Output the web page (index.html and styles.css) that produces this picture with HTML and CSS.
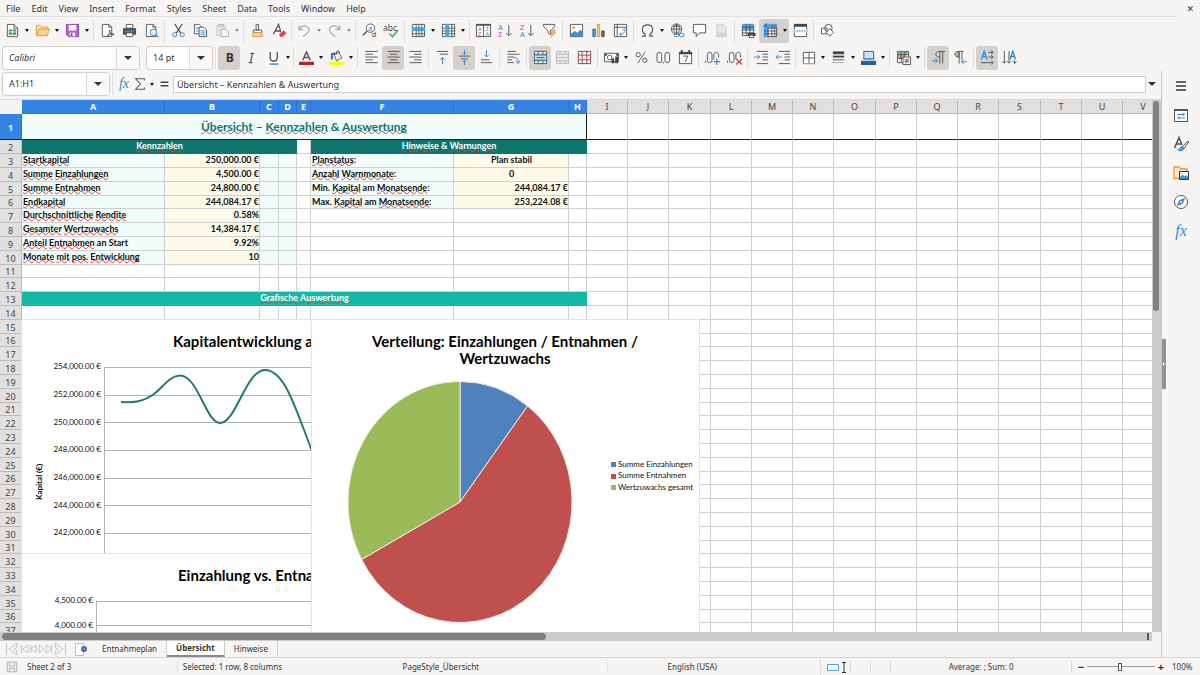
FILE: index.html
```html
<!DOCTYPE html>
<html lang="de">
<head>
<meta charset="utf-8">
<title>Übersicht</title>
<link rel="stylesheet" href="styles.css">
</head>
<body>
<header class="menubar">
  <nav class="menus">
    <button>File</button><button>Edit</button><button>View</button><button>Insert</button><button>Format</button><button>Styles</button><button>Sheet</button><button>Data</button><button>Tools</button><button>Window</button><button>Help</button>
  </nav>
  <button class="close" aria-label="Close">✕</button>
</header>

<div class="toolbar">
  <button class="tb" aria-label="New"><svg viewBox="0 0 16 16"><path class="w" stroke="#3a9b4e" d="M2.500 1.500h7l4 4v9h-11z"/><path class="n" stroke="#3a9b4e" d="M9.500 1.500v4h4"/><path fill="#2f9e48" d="M4 7h8v5.500H4z"/><path stroke="#fff" d="M4 9.500h8M8 7v5"/></svg></button><button class="dd" aria-label="New menu"></button>
  <button class="tb" aria-label="Open"><svg viewBox="0 0 16 16"><path fill="#fbe3b5" stroke="#e9973a" d="M1.500 13.500v-11h4l1.500 2h6.500v2"/><path fill="#fbd58e" stroke="#e9973a" d="M1.500 13.500l2.500-7h11.500l-2.500 7z"/></svg></button><button class="dd" aria-label="Open menu"></button>
  <button class="tb" aria-label="Save"><svg viewBox="0 0 16 16"><path fill="#b565c9" stroke="#8e3ea8" d="M1.500 1.500h13v13h-11l-2-2z"/><path fill="#fff" d="M4 2h8v6H4zM5 10.500h6V14H5z"/><path fill="#8e3ea8" d="M6 11h2v3H6z"/></svg></button><button class="dd" aria-label="Save menu"></button>
  <i class="sep"></i>
  <button class="tb" aria-label="Export as PDF"><svg viewBox="0 0 16 16"><path class="w" d="M2.500 1.500h7l3 3v10h-10z"/><path class="n" d="M9.500 1.500v3h3"/><path class="n" stroke="#d9303a" d="M7 14.500c3-2 4-5 3.500-6.500s-1.500 0 .500 2.500 4 2.500 4 1.500-4-1-8 2.500"/></svg></button>
  <button class="tb" aria-label="Print"><svg viewBox="0 0 16 16"><path class="w" d="M4.500 1.500h7v4h-7z"/><path fill="#4a5055" d="M1 5.500h14v7H1z"/><path fill="#2e8bd8" d="M3 8h10v1.500H3z"/><path class="w" d="M4.500 10.500h7v4h-7z"/></svg></button>
  <button class="tb" aria-label="Print preview"><svg viewBox="0 0 16 16"><path class="w" d="M2.500 1.500h7l3 3v10h-10z"/><path class="n" d="M9.500 1.500v3h3"/><circle cx="10" cy="10" r="3.500" fill="#e3f1fb" stroke="#2e8bd8"/><path stroke="#2e8bd8" stroke-width="1.500" d="M12.500 12.500l2.500 2.500"/></svg></button>
  <i class="sep"></i>
  <button class="tb" aria-label="Cut"><svg viewBox="0 0 16 16"><path class="n" stroke-width="1.300" d="M4 1l6.500 10M12 1L5.500 11"/><circle class="b" cx="4" cy="12.500" r="2.200"/><circle class="b" cx="12" cy="12.500" r="2.200"/></svg></button>
  <button class="tb" aria-label="Copy"><svg viewBox="0 0 16 16"><path class="w" d="M1.500 1.500h5l2.500 2.500v7.500H1.500z"/><path stroke="#2e8bd8" d="M3 5.500h4M3 8.500h4"/><path class="w" d="M6.500 4.500h5l3 3v7h-8z"/><path stroke="#2e8bd8" d="M8 8.500h5M8 10.500h5M8 12.500h5"/></svg></button>
  <button class="tb dim" aria-label="Paste"><svg viewBox="0 0 16 16"><path fill="#d4d2d0" stroke="#aaa" d="M1.500 2.500h10v11h-10z"/><path class="w" stroke="#aaa" d="M4 1.500h5v2H4zM6.500 6.500h5l3 3v5h-8z"/></svg></button><button class="dd dim" aria-label="Paste menu"></button>
  <i class="sep"></i>
  <button class="tb" aria-label="Clone formatting"><svg viewBox="0 0 16 16"><path class="w" d="M6.500 1.500h2.500v6H6.500zM3.500 7.500h9v3h-9z"/><path fill="#fbd58e" stroke="#e9973a" d="M3.500 10.500h9l1 4h-11z"/></svg></button>
  <button class="tb" aria-label="Clear formatting"><svg viewBox="0 0 16 16"><path class="n" stroke-width="1.400" d="M1.500 12L7 1.500 9.500 10M3 8.500h6"/><path fill="#e64552" d="M7.500 12l5-4 3 3-4.500 4H9z"/></svg></button>
  <i class="sep tight"></i>
  <button class="tb dim" aria-label="Undo"><svg viewBox="0 0 16 16"><path class="n" stroke-width="1.300" d="M2 2.500v4.500h4.500M2 7c3-5 9-5 10.500-1.500S11 11 6.500 14.500"/></svg></button><button class="dd dim" aria-label="Undo list"></button>
  <button class="tb dim" aria-label="Redo"><svg viewBox="0 0 16 16"><path class="n" stroke-width="1.300" d="M13.500 2.500v4.500H9M13.500 7c-3-5-9-5-10.500-1.500S4.500 11 9 14.500"/></svg></button><button class="dd dim" aria-label="Redo list"></button>
  <i class="sep"></i>
  <button class="tb" aria-label="Find and replace"><svg viewBox="0 0 16 16"><circle class="w" cx="9" cy="5.500" r="4.500"/><path class="n" stroke-width="1.600" d="M5.500 8.500L1 13"/><text x="6.500" y="8" font-size="8" fill="#2e8bd8">a</text><text x="10.500" y="15" font-size="8" fill="#444">d</text></svg></button>
  <button class="tb" aria-label="Spelling"><svg viewBox="0 0 16 16"><text x="-1" y="8" font-size="9" fill="#444">abc</text><path class="n ok" stroke-width="1.500" d="M6 11.500l3 3 6-7"/></svg></button>
  <i class="sep"></i>
  <button class="tb" aria-label="Row"><svg viewBox="0 0 16 16"><path class="w" d="M1.500 1.500h13v13h-13z"/><path fill="#4ba3e3" d="M1 4.500h14v4H1z"/><path class="n" d="M5.500 2v3M8.500 2v3M11.500 2v3M5.500 8v7M8.500 8v7M11.500 8v7M1 11.500h14"/></svg></button><button class="dd" aria-label="Row menu"></button>
  <button class="tb" aria-label="Column"><svg viewBox="0 0 16 16"><path class="w" d="M1.500 1.500h13v13h-13z"/><path fill="#4ba3e3" d="M4.500 1h4v14h-4z"/><path class="n" d="M2 5.500h3M2 8.500h3M2 11.500h3M8 5.500h7M8 8.500h7M8 11.500h7M11.500 1v14"/></svg></button><button class="dd" aria-label="Column menu"></button>
  <i class="sep"></i>
  <button class="tb" aria-label="Sort"><svg viewBox="0 0 16 16"><path class="w" d="M.5 1.500h15v13H.5z"/><path stroke="#555" stroke-width="2" d="M0 2h16"/><path stroke="#555" d="M8 2v13"/><text x="2" y="8.500" font-size="6" fill="#2e8bd8">A</text><text x="2" y="14" font-size="6" fill="#b146c2">Z</text><text x="10" y="8.500" font-size="6" fill="#b146c2">Z</text><text x="10" y="14" font-size="6" fill="#2e8bd8">A</text></svg></button>
  <button class="tb" aria-label="Sort ascending"><svg viewBox="0 0 16 16"><text x="0" y="7" font-size="8" fill="#2e8bd8">A</text><text x="0" y="15" font-size="8" fill="#b146c2">Z</text><path class="n" d="M11.500 2v11.500M8.500 10.500l3 3 3-3"/></svg></button>
  <button class="tb" aria-label="Sort descending"><svg viewBox="0 0 16 16"><text x="0" y="7" font-size="8" fill="#b146c2">Z</text><text x="0" y="15" font-size="8" fill="#2e8bd8">A</text><path class="n" d="M11.500 2v11.500M8.500 10.500l3 3 3-3"/></svg></button>
  <button class="tb" aria-label="AutoFilter"><svg viewBox="0 0 16 16"><path class="w" d="M1.500 1.500h12v2l-4.500 5v4l-2.500-2v-2l-5-5z"/><path fill="#fbb95e" stroke="#e9973a" stroke-width=".7" d="M11 7.500h3.500L12.500 10h2l-5 5.500 1.500-4H9.500z"/></svg></button>
  <i class="sep"></i>
  <button class="tb" aria-label="Image"><svg viewBox="0 0 16 16"><path class="w" d="M1.500 1.500h13v13h-13z"/><circle cx="5" cy="5" r="1.500" fill="#f2a13c"/><path fill="#3a94dc" d="M2 14v-2.500l4-3 3 2 3-3.500 2.500 2.500V14z"/></svg></button>
  <button class="tb" aria-label="Chart"><svg viewBox="0 0 16 16"><path fill="#4ba3e3" stroke="#1e6eb4" d="M2 6.500h2.500v8H2z"/><path fill="#fbc678" stroke="#e9973a" d="M6.700 1.500h2.500v13H6.700z"/><path fill="#777" stroke="#444" d="M11.500 8.500H14v6h-2.500z"/></svg></button>
  <button class="tb" aria-label="Pivot table"><svg viewBox="0 0 16 16"><path class="w" d="M1.500 1.500h13v13h-13zM1.500 4.500h13M4.500 1.500v13"/><path class="b" d="M7 12c4 1 6-2 5-5M10 8l2-2 2 2M9 10l-2 2 2 2"/></svg></button>
  <i class="sep"></i>
  <button class="tb" aria-label="Special character"><svg viewBox="0 0 16 16"><path class="n" stroke-width="1.200" d="M2 14h3.500v-2C1 9 1.500 2 8 2s7 7 2.500 10v2H14"/></svg></button><button class="dd" aria-label="Special characters"></button>
  <button class="tb" aria-label="Hyperlink"><svg viewBox="0 0 16 16"><circle class="n" cx="7" cy="6.500" r="5.500"/><path class="n" d="M1.500 6.500h11M7 1v11M3 3.500h8M7 1c-4 3-4 8 0 11M7 1c4 3 4 8 0 11"/><rect class="b" x="4.500" y="11" width="5" height="3.500" rx="1.700"/><rect class="b" x="10" y="11" width="5" height="3.500" rx="1.700"/></svg></button>
  <button class="tb" aria-label="Comment"><svg viewBox="0 0 16 16"><path class="w" d="M1.500 1.500h13v9H8l-3.500 4v-4h-3z"/></svg></button>
  <button class="tb dim" aria-label="Headers and footers"><svg viewBox="0 0 16 16"><path fill="#d4d2d0" stroke="#999" d="M3 1.500h7l3 3v10H3z"/><path fill="#aaa" d="M4 10.500h8V14H4z"/></svg></button>
  <i class="sep"></i>
  <button class="tb" aria-label="Print area"><svg viewBox="0 0 16 16"><path class="w" d="M1.500 1.500h12v12h-12z"/><path fill="#4ba3e3" d="M1 1h13v6H1z"/><path class="n" d="M1 4.500h13M1 7.500h13M1 10.500h13M5.500 1v12M9.500 1v12"/><path fill="#444" d="M7 10.500h8.500v3.500H7z"/><path class="w" d="M9 13h4.500v2.500H9z"/></svg></button>
  <span class="pair on"><button class="tb" aria-label="Freeze rows and columns"><svg viewBox="0 0 16 16"><path class="w" d="M1.500 1.500h13v13h-13z"/><path fill="#4ba3e3" d="M1 1h4.500v14H1zM1 1h14v4H1z"/><path class="n" d="M5.500 5v10M9.500 2v13M12.500 2v13M5 5.500h10M5 8.500h10M5 11.500h10"/><path stroke="#1e6eb4" d="M0 3.500h4M3.500 0v4M1 8.500h4M1 11.500h4"/></svg></button><button class="dd" aria-label="Freeze menu"></button></span>
  <button class="tb" aria-label="Split window"><svg viewBox="0 0 16 16"><path class="w" d="M1.500 1.500h13v13h-13z"/><path stroke="#444" stroke-width="3" d="M1 2.500h14"/><path stroke="#f6f5f4" stroke-width="3" d="M0 8.500h16"/><path stroke="#2e8bd8" stroke-dasharray="2 1" d="M0 8.500h16"/></svg></button>
  <i class="sep"></i>
  <button class="tb" aria-label="Draw functions"><svg viewBox="0 0 16 16"><path class="w" d="M1.500 5.500h6v6h-6z"/><circle class="n" cx="9" cy="5.500" r="4"/><path class="w" d="M10.500 6l4 4-4 4-4-4z"/></svg></button>
</div>

<div class="toolbar">
  <span class="combo font"><input type="text" value="Calibri" aria-label="Font name"><button aria-label="Font list"></button></span>
  <span class="combo size"><input type="text" value="14 pt" aria-label="Font size"><button aria-label="Size list"></button></span>
  <i class="sep"></i>
  <button class="tb on" aria-label="Bold"><svg viewBox="0 0 16 16"><text x="4" y="13" font-size="13" font-weight="700" fill="#333">B</text></svg></button>
  <button class="tb" aria-label="Italic"><svg viewBox="0 0 16 16"><path class="n" stroke-width="1.300" d="M7 3.500h4M5 13.500h4M9 3.500l-2 10"/></svg></button>
  <button class="tb" aria-label="Underline"><svg viewBox="0 0 16 16"><path class="n" stroke-width="1.400" d="M4.500 2v6c0 5 7.500 5 7.500 0V2"/><path stroke="#2e8bd8" stroke-width="1.500" d="M4 15h9"/></svg></button><button class="dd" aria-label="Underline styles"></button>
  <i class="sep tight"></i>
  <button class="tb" aria-label="Font color"><svg viewBox="0 0 16 16"><path class="n" stroke-width="1.500" d="M4 11L8 2l4 9M5.500 8h5"/><path fill="#c21f1f" d="M0 12.500h16V16H0z"/></svg></button><button class="dd" aria-label="Font colors"></button>
  <button class="tb" aria-label="Highlighting"><svg viewBox="0 0 16 16"><path class="w" d="M5.500 5l5-2.500 3 6-5.500 3z"/><path class="n" d="M8 5V2c0-1.500 3-1.500 3 0v2"/><path fill="none" stroke="#1e6eb4" stroke-width="2" d="M3 10V4.500l4-1"/><path fill="#ff0" d="M0 12.500h16V16H0z"/></svg></button><button class="dd" aria-label="Highlight colors"></button>
  <i class="sep"></i>
  <button class="tb" aria-label="Align left"><svg viewBox="0 0 16 16"><path class="n" d="M1.500 1.500h13M1.500 4.500h8M1.500 7.500h13M1.500 10.500h8M1.500 13.500h13"/></svg></button>
  <button class="tb on" aria-label="Align center"><svg viewBox="0 0 16 16"><path class="n" d="M1.500 1.500h13M4 4.500h8M1.500 7.500h13M4 10.500h8M1.500 13.500h13"/></svg></button>
  <button class="tb" aria-label="Align right"><svg viewBox="0 0 16 16"><path class="n" d="M1.500 1.500h13M6.500 4.500h8M1.500 7.500h13M6.500 10.500h8M1.500 13.500h13"/></svg></button>
  <i class="sep"></i>
  <button class="tb" aria-label="Align top"><svg viewBox="0 0 16 16"><path class="n" d="M2 1.500h12M5 4.500h9"/><path class="b" d="M8 15V8M5.500 10.500L8 8l2.500 2.500"/></svg></button>
  <button class="tb on" aria-label="Center vertically"><svg viewBox="0 0 16 16"><path class="n" d="M2 6.500h12M4.500 9.500h7"/><path class="b" d="M8 0v4.500M6 3l2 2 2-2M8 16v-4.500M6 13l2-2 2 2"/></svg></button>
  <button class="tb" aria-label="Align bottom"><svg viewBox="0 0 16 16"><path class="n" d="M2 10.500h9M2 13.500h12"/><path class="b" d="M8 0v7M5.500 5L8 7.500 10.500 5"/></svg></button>
  <i class="sep"></i>
  <button class="tb" aria-label="Wrap text"><svg viewBox="0 0 16 16"><path class="n" d="M1.500 1.500h9M1.500 4.500h13M1.500 7.500h7M1.500 10.500h5M1.500 13.500h7"/><path class="b" d="M8 8.500c4-1 5 1 5 5M10.500 11.500l2.500 3 2-3"/></svg></button>
  <i class="sep"></i>
  <button class="tb on" aria-label="Merge and center"><svg viewBox="0 0 16 16"><path class="w" d="M1.500 1.500h13v13h-13z"/><path class="n" d="M1.500 4.500h13M1.500 11.500h13M5.500 1.500v3M10.500 1.500v3M5.500 11.500v3M10.500 11.500v3"/><path fill="#bfe0f7" stroke="#2e8bd8" d="M1.500 5.500h13v5h-13z"/><path class="n" d="M4 8h8"/></svg></button>
  <button class="tb dim" aria-label="Merge cells"><svg viewBox="0 0 16 16"><path fill="#ddd" stroke="#777" d="M1.500 1.500h13v13h-13zM1.500 4.500h13M1.500 8h13M1.500 11.500h13M5.500 1.500v3M10.500 1.500v3M5.500 11.500v3M10.500 11.500v3"/></svg></button>
  <button class="tb" aria-label="Unmerge cells"><svg viewBox="0 0 16 16"><path class="w" d="M1.500 1.500h13v13h-13zM5.500 1.500v13M10.500 1.500v13"/><path class="w red" d="M1.500 5.500h13v5h-13zM5.500 5.500v5M10.500 5.500v5"/></svg></button>
  <i class="sep"></i>
  <button class="tb" aria-label="Currency"><svg viewBox="0 0 16 16"><path class="w" d="M.5 3.500h15v9H.5z"/><circle class="n" cx="6" cy="8" r="2.500"/><path fill="#444" d="M8 9h3v5H8zM12 7h3v7h-3z"/><path fill="#444" d="M1 4h2v2H1zM13 4h2v2h-2z"/></svg></button><button class="dd" aria-label="Currency list"></button>
  <button class="tb" aria-label="Percent"><svg viewBox="0 0 16 16"><circle class="n" cx="4.500" cy="5" r="2.300"/><circle class="n" cx="11.500" cy="11" r="2.300"/><path class="n" d="M12 2L4 14"/></svg></button>
  <button class="tb" aria-label="Number"><svg viewBox="0 0 16 16"><rect class="n" x="1" y="2.500" width="5" height="11" rx="2.500"/><rect class="n" x="9.500" y="2.500" width="5" height="11" rx="2.500"/><path stroke="#555" d="M7.500 12.500v2"/></svg></button>
  <button class="tb" aria-label="Date"><svg viewBox="0 0 16 16"><path class="w" d="M1.500 2.500h13v12h-13z"/><path stroke="#444" stroke-width="2" d="M1 3.500h14M4 0v4M12 0v4"/><path class="n" d="M5.500 6.500h5l-3 6.500"/></svg></button>
  <i class="sep"></i>
  <button class="tb" aria-label="Add decimal place"><svg viewBox="0 0 16 16"><path stroke="#555" d="M.5 11.500v2"/><rect class="n" x="2.500" y="2.500" width="5" height="11" rx="2.500"/><path class="n" d="M9.500 10V5c0-3.300 5-3.300 5 0v3"/><path class="b" stroke-width="1.300" d="M12.500 9v7M9 12.500h7"/></svg></button>
  <button class="tb" aria-label="Delete decimal place"><svg viewBox="0 0 16 16"><path stroke="#555" d="M.5 11.500v2"/><rect class="n" x="2.500" y="2.500" width="5" height="11" rx="2.500"/><path class="n" d="M9.500 10V5c0-3.300 5-3.300 5 0v3"/><path class="n red" stroke-width="1.300" d="M10 9.500l6 6M16 9.500l-6 6"/></svg></button>
  <i class="sep"></i>
  <button class="tb" aria-label="Increase indent"><svg viewBox="0 0 16 16"><path class="n" d="M3 1.500h12M9 4.500h6M9 7.500h6M9 10.500h6M3 14.500h12"/><path class="b" d="M0 7.500h6M3.500 5L6 7.500 3.500 10"/></svg></button>
  <button class="tb" aria-label="Decrease indent"><svg viewBox="0 0 16 16"><path class="n" d="M3 1.500h12M9 4.500h6M9 7.500h6M9 10.500h6M3 14.500h12"/><path class="b" d="M0 7.500h6M2.500 5L0 7.500 2.500 10"/></svg></button>
  <i class="sep tight"></i>
  <button class="tb" aria-label="Borders"><svg viewBox="0 0 16 16"><path class="w" d="M2.500 2.500h12v12h-12zM8.500 2.500v12M2.500 8.500h12"/><path stroke="#f2a13c" d="M2 14.500h13"/></svg></button><button class="dd" aria-label="Borders list"></button>
  <button class="tb" aria-label="Border style"><svg viewBox="0 0 16 16"><path stroke="#444" stroke-width="3" d="M2 3h12"/><path stroke="#444" stroke-width="2" d="M2 7h12"/><path stroke="#555" d="M2 10.500h12"/><path stroke="#555" stroke-dasharray="1 1" d="M2 13.500h12"/></svg></button><button class="dd" aria-label="Border styles"></button>
  <button class="tb" aria-label="Border color"><svg viewBox="0 0 16 16"><path fill="#c9e3f7" stroke="#555" d="M3 1.500h10.500v8H3z"/><path stroke="#2e8bd8" d="M2 9.500h12.500"/><path fill="#1d63a8" d="M0 11.500h16V16H0z"/></svg></button><button class="dd" aria-label="Border colors"></button>
  <i class="sep"></i>
  <button class="tb" aria-label="Conditional formatting"><svg viewBox="0 0 16 16"><path class="w" d="M1.500 1.500h12v12h-12z"/><path fill="#7cc98a" d="M2 2h11v3H2z"/><path fill="#f08a84" d="M2 5h8v4H2z"/><path class="n" d="M1.500 5h12M1.500 9h12M5.500 1.500v12M9.500 1.500v12"/><path class="w" d="M7.500 7.500h8v8h-8z"/><path class="n" d="M9 10.500h5M9 12.500h5M13 9l-3 5"/></svg></button><button class="dd" aria-label="Conditional list"></button>
  <i class="sep"></i>
  <button class="tb on" aria-label="Left to right"><svg viewBox="0 0 16 16"><path class="n" d="M15 1.500H8.500c-4.500 0-4.500 6 0 6h1M9.500 1.500v13M12.500 1.500v13"/><path class="b" d="M1 11.500h6M4.500 9L7 11.500 4.500 14"/></svg></button>
  <button class="tb" aria-label="Right to left"><svg viewBox="0 0 16 16"><path fill="#bbb" stroke="#555" d="M11 1.500H5.500c-4.500 0-4.500 6 0 6h1v-6"/><path class="n" d="M6.500 1.500v13M9.500 1.500v9"/><path class="b" d="M15 12.500H9M11.500 10L9 12.500l2.500 2.500"/></svg></button>
  <i class="sep"></i>
  <button class="tb on" aria-label="Text direction horizontal"><svg viewBox="0 0 16 16"><path class="b" stroke-width="1.500" d="M1.500 10L4.500 1.500 7.500 10M2.500 7h4"/><path class="n" d="M9 2.500h5M12 .5l2 2-2 2M9 7.500h5M12 5.500l2 2-2 2M1 13.500h13M12 11.500l2 2-2 2"/></svg></button>
  <button class="tb" aria-label="Text direction vertical"><svg viewBox="0 0 16 16"><path class="b" stroke-width="1.500" d="M8.500 10l3-8.500 3 8.500M9.500 7h4"/><path class="n" d="M2.500 1v13M.5 12l2 2 2-2M7.500 1v13M5.500 12l2 2 2-2M13.500 11v4M11.500 12l2 2 2-2"/></svg></button>
</div>

<div class="workspace">
  <main class="editor">
    <div class="formula-bar">
      <span class="combo name"><input type="text" value="A1:H1" aria-label="Name box"><button aria-label="Name list"></button></span>
      <i class="sep"></i>
      <button class="fb fx" aria-label="Function wizard"><i>fx</i></button>
      <button class="fb" aria-label="Select function"><svg viewBox="0 0 16 16"><path class="n" stroke-width="1.200" d="M13 4V2H3l5.500 6L3 14h10v-2"/></svg></button><button class="dd" aria-label="Functions"></button>
      <button class="fb" aria-label="Formula"><svg viewBox="0 0 16 16"><path stroke="#444" stroke-width="1.500" d="M4 6h9M4 10h9"/></svg></button>
      <input class="formula" type="text" value="Übersicht – Kennzahlen &amp; Auswertung" aria-label="Input line">
      <button class="dd big" aria-label="Expand formula bar"></button>
    </div>
    <div class="sheet">
      <div class="canvas">
        <table class="grid" id="grid"></table>
        <svg class="chart line" viewBox="0 0 560 234" role="img" aria-label="Kapitalentwicklung">
          <g class="lines"><path d="M82 47.500h478M82 75.500h478M82 102.500h478M82 130.500h478M82 158.500h478M82 185.500h478M82 213.500h478M82.500 47v187"/></g>
          <path class="curve" d="M99 82C112 82.600 121 82 132 74 141 67 148 55.500 158 55.500 176 55.500 184 103 198 103 214 103 224 50 243 50 263 50 274 90 290 131"/>
          <text class="title" x="151" y="27">Kapitalentwicklung am</text>
          <g class="axis"><text x="79" y="49">254,000.00 €</text><text x="79" y="77">252,000.00 €</text><text x="79" y="105">250,000.00 €</text><text x="79" y="132">248,000.00 €</text><text x="79" y="160">246,000.00 €</text><text x="79" y="188">244,000.00 €</text><text x="79" y="215">242,000.00 €</text></g>
          <text class="ylabel" transform="translate(20 180) rotate(-90)">Kapital (€)</text>
        </svg>
        <svg class="chart bar" viewBox="0 0 560 234" role="img" aria-label="Einzahlung vs. Entnahme">
          <g class="lines"><path d="M74 47.500h486M74 71.500h486M74.500 47v187"/></g>
          <text class="title" x="156" y="27">Einzahlung vs. Entnahme</text>
          <g class="axis"><text x="71" y="49">4,500.00 €</text><text x="71" y="74">4,000.00 €</text></g>
        </svg>
        <svg class="chart pie" viewBox="0 0 387 320" role="img" aria-label="Verteilung">
          <text class="title mid" x="193" y="27">Verteilung: Einzahlungen / Entnahmen /</text>
          <text class="title mid" x="193" y="44">Wertzuwachs</text>
          <g class="slices">
            <path fill="#4f81bd" d="M148 182V61.500A112 120.500 0 0 1 215.600 85.900z"/>
            <path fill="#c0504d" d="M148 182L215.600 85.900A112 120.500 0 1 1 49.600 239.500z"/>
            <path fill="#9bbb59" d="M148 182L49.600 239.500A112 120.500 0 0 1 148 61.500z"/>
          </g>
          <path fill="#4f81bd" d="M299 142h5v5h-5z"/><path fill="#c0504d" d="M299 154h5v5h-5z"/><path fill="#9bbb59" d="M299 165h5v5h-5z"/>
          <g class="legend"><text x="306" y="147">Summe Einzahlungen</text><text x="306" y="158">Summe Entnahmen</text><text x="306" y="170">Wertzuwachs gesamt</text></g>
        </svg>
      </div>
      <div class="vscroll"><div class="thumb"></div></div>
      <div class="hscroll"><div class="thumb"></div><i class="split"></i></div>
    </div>
    <div class="tabs">
      <svg class="tabnav" viewBox="0 0 62 14"><g fill="none" stroke="#c6c4c2"><path d="M1.500 1v12M12 1L4 7l8 6V9L9 7l3-2zM16.500 3v8M23 3l-5 4 5 4zM31 3l-5 4 5 4zM26 3v8M34 3l5 4-5 4zM41 3l5 4-5 4zM46.500 3v8M50 1l8 6-8 6V9l3-2-3-2zM60.500 1v12"/></g></svg>
      <button class="addsheet" aria-label="Add sheet"><svg viewBox="0 0 16 16"><path fill="#fff" stroke="#bbb" d="M2.500 2.500h8v12h-8z"/><circle cx="11" cy="8" r="2.200" fill="#fff" stroke="#2a64b8" stroke-width="1.500"/><path stroke="#2a64b8" d="M11 6v4M9 8h4"/></svg></button>
      <button class="tab">Entnahmeplan</button><button class="tab active">Übersicht</button><button class="tab">Hinweise</button>
    </div>
  </main>
  <aside class="sidebar">
    <button class="sb" aria-label="Sidebar settings"><svg viewBox="0 0 16 16"><path stroke="#333" stroke-width="1.500" d="M3 4h10M3 8h10M3 12h10"/></svg></button>
    <button class="sb" aria-label="Properties"><svg viewBox="0 0 16 16"><path class="w" d="M1.500 2.500h13v12h-13z"/><path stroke="#555" stroke-width="2" d="M1 3h14"/><path class="b" d="M4 7.500h8M4 11h8M10 6v3M6 9.500v3"/></svg></button>
    <button class="sb" aria-label="Styles"><svg viewBox="0 0 16 16"><path class="n" stroke-width="1.600" d="M1.500 12L6 1.500 9 9M3 8h5"/><path class="w" d="M15 5l-6 6 2 1.500L15.500 6z"/><path fill="#4ba3e3" stroke="#1e6eb4" stroke-width=".7" d="M9.500 10.500c-3 0-2 3-4.500 3.500 3 2 6.500 0 6-2z"/></svg></button>
    <button class="sb" aria-label="Gallery"><svg viewBox="0 0 16 16"><path fill="#fdeacb" stroke="#e9973a" stroke-width="1.300" d="M1 13.500V2h5l1.500 2H14v9.500z"/><path fill="#fff" stroke="#333" d="M6.500 6.500h9v8h-9z"/><path fill="#3a94dc" d="M7 14v-2l2.500-2.500 2 2L13 10l2 2v2z"/><circle cx="9" cy="8.500" r=".8" fill="#f2a13c"/></svg></button>
    <button class="sb" aria-label="Navigator"><svg viewBox="0 0 16 16"><circle class="w" cx="8" cy="8" r="6.500"/><path fill="#3a94dc" stroke="#1e6eb4" stroke-width=".7" d="M11.500 4.500L9.500 9.500l-5 2 2-5z"/><circle cx="8" cy="8" r="1" fill="#fff"/></svg></button>
    <button class="sb fx" aria-label="Functions"><i>fx</i></button>
    <button class="handle" aria-label="Hide sidebar"></button>
  </aside>
</div>

<footer class="status">
  <span class="doc"><svg viewBox="0 0 16 16"><path fill="none" stroke="#aaa" d="M2.500 2.500h11v11h-11zM5 3v4h6V3M5 13.500v-4h6v4"/></svg></span>
  <span>Sheet 2 of 3</span>
  <span class="line">Selected: 1 row, 8 columns</span>
  <span class="page">PageStyle_Übersicht</span>
  <span class="line center lang">English (USA)</span>
  <span class="line sel"><svg viewBox="0 0 24 16"><path fill="#fff" stroke="#4ba3e3" d="M1.500 5.500h11v6h-11z"/><path fill="none" stroke="#333" d="M16 3.500h4M16 13.500h4M18 3.500v10"/></svg></span>
  <span class="line"></span><span class="line"></span>
  <span class="line center">Average: ; Sum: 0</span>
  <span class="line zoom"><button aria-label="Zoom out">−</button><input type="range" min="0" max="100" value="48" aria-label="Zoom"><button aria-label="Zoom in">+</button></span>
  <span class="pct">100%</span>
</footer>
<script src="sheet.js"></script>
</body>
</html>
```
FILE: styles.css
```css
* { box-sizing: border-box; }
body { margin: 0; height: 100vh; display: flex; flex-direction: column; overflow: hidden; background: #f6f5f4; color: #333; font: 8px/12px "Noto Sans", sans-serif; }
button { border: 0; padding: 0; margin: 0; background: none; color: inherit; font: inherit; }
input { font: inherit; color: inherit; }
svg { display: block; overflow: visible; }
.n { fill: none; stroke: #555; }
.w { fill: #fff; stroke: #555; }
.b { fill: none; stroke: #2e8bd8; }
.ok { stroke: #35a853; }
.red { stroke: #d9303a; }

.menubar { display: flex; justify-content: space-between; align-items: center; height: 17px; flex: none; padding-right: 6px; }
.menus { display: flex; flex: 1; gap: 11px; padding-left: 6px; height: 17px; margin-right: 10px; border-bottom: 1px solid #e2e0de; font-size: 9px; line-height: 17px; }
.close { font: bold 9px/16px "DejaVu Sans", sans-serif; }

.toolbar { display: flex; align-items: center; height: 27px; flex: none; padding-left: 1px; }
.tb { width: 22px; height: 24px; flex: none; display: grid; place-items: center; border-radius: 3px; }
.tb svg { width: 15px; height: 15px; }
.on { background: #d3d0cd; border-radius: 3px; }
.pair { display: flex; }
.dim { opacity: .45; }
.dd { width: 8px; height: 24px; flex: none; display: grid; place-items: center; }
.dd::before, .combo button::before { content: ""; border: 2px solid transparent; border-top: 3px solid #111; border-bottom: 0; }
.dd.big::before, .combo button::before { border-width: 4px 4px 0; border-top-color: #333; }
.sep { width: 5px; height: 22px; flex: none; background: linear-gradient(#e0dedc, #e0dedc) center / 1px 100% no-repeat; }
.tight { width: 3px; }

.combo { display: flex; height: 24px; flex: none; border: 1px solid #cfccc9; border-radius: 4px; background: #fff; font-size: 9px; overflow: hidden; }
.combo input { flex: 1; min-width: 0; border: 0; padding: 0 6px; background: none; }
.combo button { width: 23px; display: grid; place-items: center; border-left: 1px solid #dedbd8; background: #faf9f8; }
.font { width: 138px; margin: 0 6px 0 1px; font-style: italic; }
.size { width: 67px; }
.name { width: 108px; }

.workspace { display: flex; flex: 1; min-height: 0; }
.editor { flex: 1; min-width: 0; display: flex; flex-direction: column; }
.formula-bar { display: flex; align-items: center; height: 29px; flex: none; padding: 0 5px 2px 2px; border-bottom: 1px solid #d8d6d4; }
.fb { width: 16px; height: 20px; flex: none; display: grid; place-items: center; }
.fb svg { width: 14px; height: 14px; }
.fx { color: #2e8bd8; font: 16px/20px "Liberation Serif", serif; }
.fb.fx { font-size: 14px; }
.formula-bar .sep { margin-right: 1px; }
.formula { flex: 1; min-width: 0; height: 17px; margin: 0 2px 0 1px; padding: 0 3px; border: 1px solid #d0cecb; background: #fff; font-size: 9px; }

.sheet { flex: 1; min-height: 0; display: grid; grid-template: 1fr 9px / 1fr 9px; }
.canvas { position: relative; overflow: hidden; background: #fff; }
.grid { table-layout: fixed; width: 0; border-collapse: separate; border-spacing: 0; font: bold 9px/10px Lato, sans-serif; color: #111; }
.grid tr { height: 14px; }
.grid tbody tr:nth-child(5n+1) { height: 13px; }
.grid tbody tr:first-child { height: 26px; }
.grid th, .grid td { padding: 0; height: inherit; border: 0 solid #cfcfcf; border-width: 0 1px 1px 0; white-space: nowrap; overflow: hidden; }
.grid th { font: 9px/10px "Noto Sans", sans-serif; color: #444; background: #e1e0df; border-color: #bdbbb9; }
.grid tbody th { padding-top: 2px; }
.grid th.corner { background: #f6f5f4; border-color: #f6f5f4; }
.grid th.picked { background: #3584e4; color: #fff; font-weight: 700; border-color: #2c73cb; }
.grid td { padding: 1px 0 0 1px; vertical-align: top; }
.grid tbody tr:first-child > * { border-bottom-color: #222; }
.grid .mint { background: #f0fdfa; }
.grid .cream { background: #fffbeb; }
.grid .num { text-align: right; padding-right: 0; }
.grid .mid { text-align: center; }
.grid .heading { text-align: center; padding: 0; font-size: 12px; line-height: 24px; color: #0f766e; vertical-align: middle; border-right-color: #222; background: #f0fdfa; }
.grid .band { text-align: center; color: #fff; background: #0f766e; border-color: #0f766e; }
.grid .teal { background: #14b8a6; border-color: #14b8a6; }
.spell { text-decoration: underline wavy #e03c3c 1px; text-decoration-skip-ink: none; text-underline-offset: -1px; }

.chart { position: absolute; overflow: hidden; background: #fff; outline: 1px solid #e3e3e3; font-family: Lato, sans-serif; }
.line.chart { left: 22px; top: 220px; width: 560px; height: 234px; }
.bar.chart { left: 22px; top: 454px; width: 560px; height: 234px; }
.pie.chart { left: 312px; top: 220px; width: 387px; height: 320px; }
.lines path { stroke: #b3b3b3; fill: none; }
.curve { fill: none; stroke: #1f7a72; stroke-width: 2; }
.title { font-size: 15px; font-weight: 700; fill: #000; }
.title.mid { text-anchor: middle; }
.axis, .legend { font-size: 8px; fill: #111; }
.axis { text-anchor: end; }
.ylabel { font-size: 8px; font-weight: 700; }
.slices path { stroke: #f3ece6; stroke-width: 1; }

.vscroll { background: #cbcbcb; padding: 1px 2px 0 1px; }
.vscroll .thumb { height: 39.5%; border-radius: 3px; background: #7f8180; }
.hscroll { background: #cbcbcb; padding: 1px 3px 1px 2px; display: flex; justify-content: space-between; }
.hscroll .thumb { width: 47.4%; border-radius: 4px; background: #7f8180; }
.split { width: 2px; background: #555; }

.tabs { display: flex; align-items: center; height: 16px; flex: none; }
.tabnav { width: 62px; height: 14px; margin-left: 5px; }
.addsheet { width: 26px; padding-left: 6px; }
.addsheet svg { width: 16px; height: 16px; }
.tab { height: 16px; padding: 0 9px; border-right: 1px solid #ccc; }
.tab.active { font-weight: 700; background: #fff; border-bottom: 2px solid #8b8b8b; }

.sidebar { position: relative; width: 39px; flex: none; border-left: 1px solid #c9c7c5; display: flex; flex-direction: column; align-items: center; gap: 7px; padding-top: 4px; }
.sb { width: 22px; height: 22px; display: grid; place-items: center; }
.sb svg { width: 16px; height: 16px; }
.handle { position: absolute; left: 0; top: 50%; width: 4px; height: 50px; margin-top: -25px; background: #919191; display: grid; place-items: center; }
.handle::before { content: ""; border: 2px solid transparent; border-left-color: #fff; border-right: 0; }

.status { display: grid; grid-template-columns: 27px 150fr 220fr 211fr 213fr 30px 20px 20px 181fr 94px 35px; align-items: center; height: 18px; flex: none; border-top: 1px solid #d5d3d1; }
.status .line { border-left: 1px solid #dedcda; padding-left: 5px; min-height: 12px; }
.status .center { text-align: center; padding-left: 0; }
.status .lang { border-color: #e8e6e4; padding-right: 44px; }
.page { padding-left: 6px; }
.pct { padding-left: 7px; }
.doc svg { width: 14px; height: 14px; margin-left: 5px; }
.status .sel svg { width: 24px; height: 16px; }
.zoom { display: flex; align-items: center; gap: 2px; }
.zoom button { width: 8px; font: bold 11px/12px "Noto Sans", sans-serif; }
.zoom input { appearance: none; flex: 1; min-width: 0; margin: 0; height: 8px; background: linear-gradient(#999, #999) center / 100% 1px no-repeat; }
.zoom input::-webkit-slider-thumb { appearance: none; width: 4px; height: 8px; border: 1px solid #555; background: #fff; }
```
FILE: sheet.js
```javascript
const widths = [143, 95, 19, 18, 14, 143, 115, 18, 41, 41, 42, 41, 41, 41, 42, 41, 41, 41, 42, 41, 41, 41];
const letters = "ABCDEFGHIJKLMNOPQRSTUV".split("");
const rowCount = 37;

// Words between asterisks carry the spell-check underline.
const cells = {
  A1: { text: "*Übersicht* – *Kennzahlen* & *Auswertung*", cls: "heading", span: 8 },
  A2: { text: "*Kennzahlen*", cls: "band", span: 4 },
  F2: { text: "*Hinweise* & *Warnungen*", cls: "band", span: 3 },
  A13: { text: "*Grafische* *Auswertung*", cls: "band teal", span: 8 },
  F3: { text: "*Planstatus*:", cls: "mint" },
  G3: { text: "Plan stabil", cls: "cream mid" },
  F4: { text: "*Anzahl* *Warnmonate*:", cls: "mint" },
  G4: { text: "0", cls: "cream mid" },
  F5: { text: "Min. *Kapital* am *Monatsende*:", cls: "mint" },
  G5: { text: "244,084.17 €", cls: "cream num" },
  F6: { text: "Max. *Kapital* am *Monatsende*:", cls: "mint" },
  G6: { text: "253,224.08 €", cls: "cream num" }
};
[
  ["*Startkapital*", "250,000.00 €"],
  ["*Summe* *Einzahlungen*", "4,500.00 €"],
  ["*Summe* *Entnahmen*", "24,800.00 €"],
  ["*Endkapital*", "244,084.17 €"],
  ["*Durchschnittliche* *Rendite*", "0.58%"],
  ["*Gesamter* *Wertzuwachs*", "14,384.17 €"],
  ["*Anteil* *Entnahmen* an Start", "9.92%"],
  ["*Monate* *mit* *pos.* *Entwicklung*", "10"]
].forEach(([label, value], i) => {
  const row = i + 3;
  cells["A" + row] = { text: label, cls: "mint" };
  cells["B" + row] = { text: value, cls: "cream num" };
  cells["C" + row] = { text: "", cls: "mint" };
  cells["D" + row] = { text: "", cls: "mint" };
});

const markup = text => text.replace(/&/g, "&amp;").replace(/\*([^*]+)\*/g, '<span class="spell">$1</span>');

let html = '<colgroup><col style="width:22px">' + widths.map(w => `<col style="width:${w}px">`).join("") + "</colgroup>";
html += '<thead><tr><th class="corner"></th>' + letters.map((l, i) => `<th scope="col" class="${i < 8 ? "picked" : ""}">${l}</th>`).join("") + "</tr></thead><tbody>";
for (let row = 1; row <= rowCount; row++) {
  html += `<tr><th scope="row" class="${row === 1 ? "picked" : ""}">${row}</th>`;
  for (let c = 0; c < letters.length; c++) {
    const cell = cells[letters[c] + row];
    if (!cell) { html += "<td></td>"; continue; }
    html += `<td class="${cell.cls}" colspan="${cell.span || 1}">${markup(cell.text)}</td>`;
    c += (cell.span || 1) - 1;
  }
  html += "</tr>";
}
document.getElementById("grid").innerHTML = html + "</tbody>";
```
